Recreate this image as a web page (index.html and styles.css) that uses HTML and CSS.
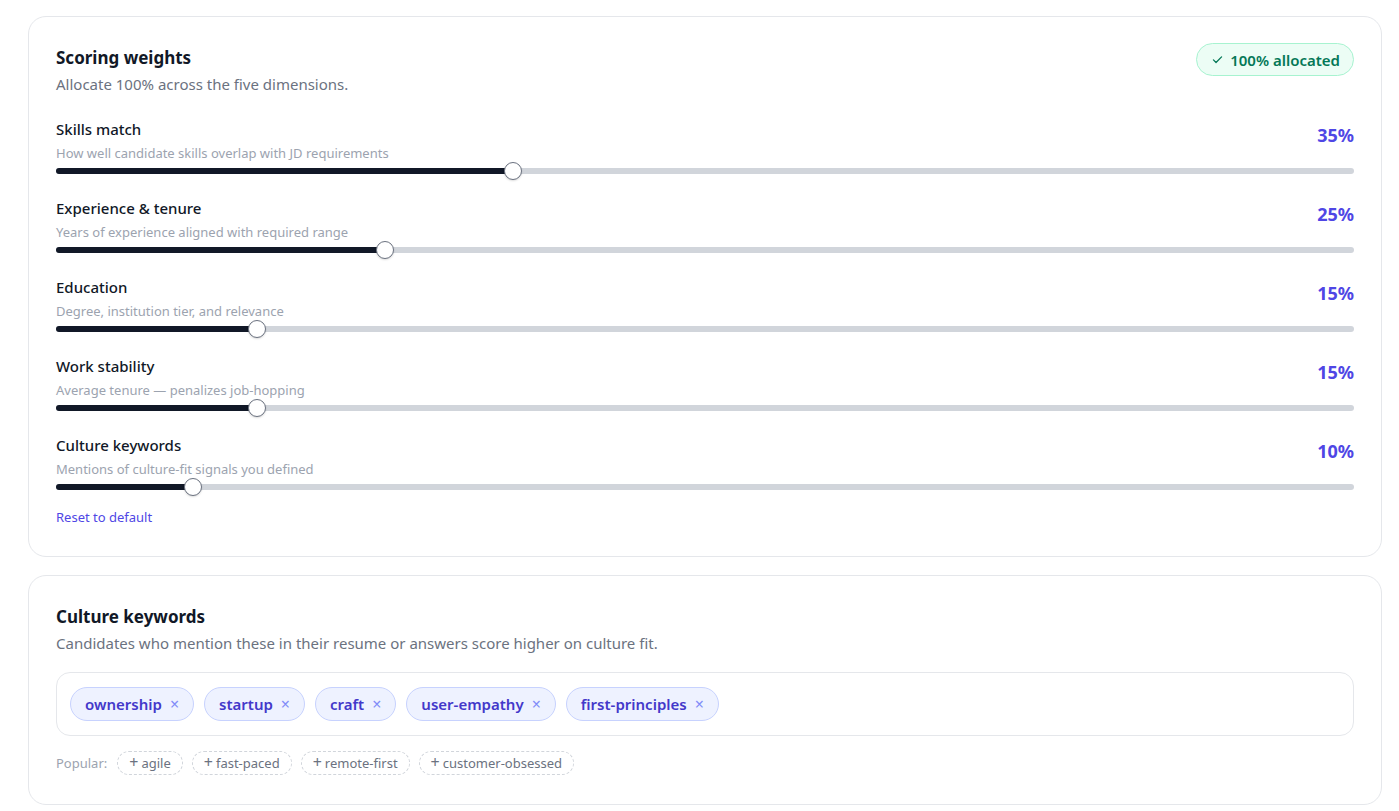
FILE: index.html
```html
<!DOCTYPE html>
<html>
<head>
    <meta charset="utf-8" />
    <title>Scoring settings</title>
    <link rel="stylesheet" href="styles.css">
</head>
<body>
    <main class="page">
        <section class="card">
            <div class="cardHead">
                <div>
                    <h2 class="cardTitle">Scoring weights</h2>
                    <p class="cardSub">Allocate 100% across the five dimensions.</p>
                </div>
                <span class="badgeOk">
                    <svg width="13" height="13" viewBox="0 0 16 16"><path d="M3 8.5l3.2 3.2L13 4.8" fill="none" stroke="currentColor" stroke-width="1.6" stroke-linecap="round" stroke-linejoin="round"/></svg>
                    100% allocated
                </span>
            </div>

            <div class="weights">
                <div class="weight">
                    <div class="weightTop">
                        <div>
                            <p class="weightName">Skills match</p>
                            <p class="weightDesc">How well candidate skills overlap with JD requirements</p>
                        </div>
                        <span class="weightValue">35%</span>
                    </div>
                    <div class="track"><div class="fill" style="--p: 0.35"><span class="thumb"></span></div></div>
                </div>
                <div class="weight">
                    <div class="weightTop">
                        <div>
                            <p class="weightName">Experience &amp; tenure</p>
                            <p class="weightDesc">Years of experience aligned with required range</p>
                        </div>
                        <span class="weightValue">25%</span>
                    </div>
                    <div class="track"><div class="fill" style="--p: 0.25"><span class="thumb"></span></div></div>
                </div>
                <div class="weight">
                    <div class="weightTop">
                        <div>
                            <p class="weightName">Education</p>
                            <p class="weightDesc">Degree, institution tier, and relevance</p>
                        </div>
                        <span class="weightValue">15%</span>
                    </div>
                    <div class="track"><div class="fill" style="--p: 0.15"><span class="thumb"></span></div></div>
                </div>
                <div class="weight">
                    <div class="weightTop">
                        <div>
                            <p class="weightName">Work stability</p>
                            <p class="weightDesc">Average tenure — penalizes job-hopping</p>
                        </div>
                        <span class="weightValue">15%</span>
                    </div>
                    <div class="track"><div class="fill" style="--p: 0.15"><span class="thumb"></span></div></div>
                </div>
                <div class="weight">
                    <div class="weightTop">
                        <div>
                            <p class="weightName">Culture keywords</p>
                            <p class="weightDesc">Mentions of culture-fit signals you defined</p>
                        </div>
                        <span class="weightValue">10%</span>
                    </div>
                    <div class="track"><div class="fill" style="--p: 0.10"><span class="thumb"></span></div></div>
                </div>
            </div>

            <a class="resetLink" href="#">Reset to default</a>
        </section>

        <section class="card">
            <h2 class="cardTitle">Culture keywords</h2>
            <p class="cardSub">Candidates who mention these in their resume or answers score higher on culture fit.</p>

            <div class="tagBox">
                <span class="tag">ownership <span class="tagX">×</span></span>
                <span class="tag">startup <span class="tagX">×</span></span>
                <span class="tag">craft <span class="tagX">×</span></span>
                <span class="tag">user-empathy <span class="tagX">×</span></span>
                <span class="tag">first-principles <span class="tagX">×</span></span>
            </div>

            <div class="popular">
                <span class="popularLabel">Popular:</span>
                <span class="suggest"><span class="plus">+</span> agile</span>
                <span class="suggest"><span class="plus">+</span> fast-paced</span>
                <span class="suggest"><span class="plus">+</span> remote-first</span>
                <span class="suggest"><span class="plus">+</span> customer-obsessed</span>
            </div>
        </section>
    </main>
</body>
</html>
```

FILE: styles.css
```css
body {
    font-family: "Noto Sans", "Open Sans", sans-serif;
    margin: 0;
    background-color: white;
    color: #111827;
}
p, h2 {
    margin: 0;
}
.page {
    display: flex;
    flex-direction: column;
    gap: 18px;
    padding: 16px 17px 0 28px;
}
.card {
    border: 1px solid #e5e7eb;
    border-radius: 18px;
    padding: 29px 27px 29px 27px;
    background-color: white;
}
.cardHead {
    display: flex;
    justify-content: space-between;
    align-items: flex-start;
}
.cardTitle {
    font-size: 17px;
    font-weight: 700;
    line-height: 24px;
}
.cardSub {
    font-size: 15px;
    color: #6b7280;
    line-height: 22px;
    margin-top: 3px;
}
.badgeOk {
    display: inline-flex;
    align-items: center;
    gap: 6px;
    height: 31px;
    padding: 0 13px 0 14px;
    border: 1px solid #a7f3d0;
    border-radius: 999px;
    background-color: #ecfdf5;
    color: #047857;
    font-size: 15px;
    font-weight: 600;
    margin-top: -3px;
}
.weights {
    display: flex;
    flex-direction: column;
    gap: 23px;
    margin-top: 23px;
}
.weightTop {
    display: flex;
    justify-content: space-between;
    align-items: flex-start;
}
.weightName {
    font-size: 15px;
    font-weight: 500;
    line-height: 22px;
}
.weightDesc {
    font-size: 13px;
    color: #9ca3af;
    line-height: 18px;
    margin-top: 4px;
}
.weightValue {
    font-size: 18px;
    font-weight: 700;
    line-height: 24px;
    color: #4f46e5;
    margin-top: 5px;
}
.track {
    position: relative;
    height: 6px;
    border-radius: 3px;
    background-color: #d1d5db;
    margin-top: 6px;
}
/* thumb centre sits at p * (width - thumb) + half thumb, like a native range */
.fill {
    position: relative;
    height: 100%;
    border-radius: 3px;
    background-color: #111827;
    width: calc(var(--p) * (100% - 18px) + 9px);
}
.thumb {
    position: absolute;
    right: -9px;
    top: -6px;
    width: 16px;
    height: 16px;
    border-radius: 50%;
    background-color: white;
    border: 1px solid #6b7280;
    box-shadow: 0 1px 2px rgba(0, 0, 0, 0.15);
}
.resetLink {
    display: inline-block;
    margin-top: 18px;
    font-size: 13px;
    color: #4f46e5;
    text-decoration: none;
}
.tagBox {
    display: flex;
    flex-wrap: wrap;
    gap: 10px;
    margin-top: 18px;
    padding: 14px 13px;
    border: 1px solid #e5e7eb;
    border-radius: 14px;
}
.tag {
    display: inline-flex;
    align-items: center;
    gap: 8px;
    height: 32px;
    padding: 0 14px;
    border: 1px solid #c7d2fe;
    border-radius: 999px;
    background-color: #eef2ff;
    color: #4338ca;
    font-size: 15px;
    font-weight: 600;
}
.tagX {
    color: #818cf8;
    font-weight: 400;
    font-size: 16px;
}
.popular {
    display: flex;
    align-items: center;
    gap: 9px;
    margin-top: 15px;
    font-size: 13px;
}
.popularLabel {
    color: #9ca3af;
    margin-right: 1px;
}
.suggest {
    display: inline-flex;
    align-items: center;
    gap: 3px;
    height: 22px;
    padding: 0 11px;
    border: 1px dashed #d1d5db;
    border-radius: 999px;
    color: #6b7280;
}
.plus {
    font-size: 16px;
    line-height: 1;
    margin-top: -2px;
}
```
